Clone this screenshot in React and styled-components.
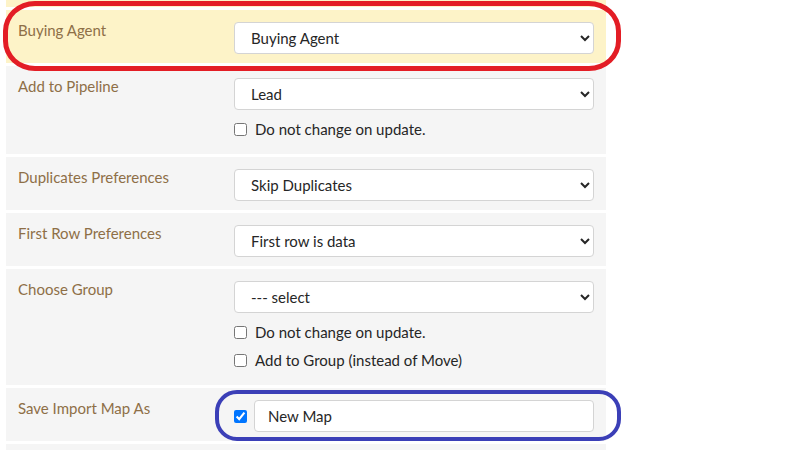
import styled, { createGlobalStyle } from "styled-components";

const GlobalStyle = createGlobalStyle`
  body {
    margin: 0;
    background: #fff;
    font-family: Lato, "Open Sans", Arial, sans-serif;
  }
`;

const Page = styled.div`
  position: relative;
  width: 800px;
  height: 450px;
  overflow: hidden;
`;

const Panel = styled.div`
  width: 600px;
  margin-left: 6px;
  display: flex;
  flex-direction: column;
  gap: 3px;
`;

const Row = styled.div`
  display: grid;
  grid-template-columns: 216px 1fr;
  padding: 12px 12px 9px;
  background: ${(p) => (p.$highlight ? "#fdf3c8" : "#f5f5f5")};
  min-height: ${(p) => (p.$stub ? "7px" : "auto")};
  ${(p) => p.$stub && "padding: 0;"}
`;

const Label = styled.div`
  color: #8e6f47;
  font-size: 15px;
  line-height: 16px;
`;

const Field = styled.div`
  display: flex;
  flex-direction: column;
`;

const Select = styled.select`
  height: 32px;
  width: 100%;
  border: 1px solid #d4d4d4;
  border-radius: 4px;
  background: #fff;
  color: #262626;
  font-family: inherit;
  font-size: 15px;
  padding: 0 12px;
  outline: none;
`;

const Options = styled.div`
  display: flex;
  flex-direction: column;
  gap: 6px;
  margin-top: 8px;
  padding-bottom: 5px;
`;

const Check = styled.label`
  display: flex;
  align-items: center;
  gap: 8px;
  height: 22px;
  font-size: 15px;
  color: #262626;

  input {
    margin: 0;
    width: 13px;
    height: 13px;
  }
`;

const SaveField = styled.div`
  display: flex;
  align-items: center;
  gap: 7px;

  input[type="checkbox"] {
    margin: 0;
    width: 13px;
    height: 13px;
  }
`;

const TextInput = styled.input`
  flex: 1;
  height: 32px;
  box-sizing: border-box;
  border: 1px solid #d4d4d4;
  border-radius: 4px;
  background: #fff;
  color: #262626;
  font-family: inherit;
  font-size: 15px;
  padding: 0 13px;
  outline: none;
`;

// hand-drawn annotation rings laid over the form
const Mark = styled.div`
  position: absolute;
  box-sizing: border-box;
  pointer-events: none;
  left: ${(p) => p.$x}px;
  top: ${(p) => p.$y}px;
  width: ${(p) => p.$w}px;
  height: ${(p) => p.$h}px;
  border: ${(p) => p.$stroke}px solid ${(p) => p.$color};
  border-radius: ${(p) => p.$r};
`;

const SelectRow = ({ label, value, options = [value], checks = [], highlight }) => (
  <Row $highlight={highlight}>
    <Label>{label}</Label>
    <Field>
      <Select defaultValue={value}>
        {options.map((o) => (
          <option key={o}>{o}</option>
        ))}
      </Select>
      {checks.length > 0 && (
        <Options>
          {checks.map((c) => (
            <Check key={c}>
              <input type="checkbox" />
              {c}
            </Check>
          ))}
        </Options>
      )}
    </Field>
  </Row>
);

export default function App() {
  return (
    <Page>
      <GlobalStyle />
      <Panel>
        <Row $highlight $stub />
        <SelectRow highlight label="Buying Agent" value="Buying Agent" />
        <SelectRow
          label="Add to Pipeline"
          value="Lead"
          checks={["Do not change on update."]}
        />
        <SelectRow label="Duplicates Preferences" value="Skip Duplicates" />
        <SelectRow label="First Row Preferences" value="First row is data" />
        <SelectRow
          label="Choose Group"
          value="--- select"
          checks={["Do not change on update.", "Add to Group (instead of Move)"]}
        />
        <Row>
          <Label>Save Import Map As</Label>
          <SaveField>
            <input type="checkbox" defaultChecked />
            <TextInput defaultValue="New Map" />
          </SaveField>
        </Row>
        <Row>
          <Label />
        </Row>
      </Panel>
      <Mark $x={3} $y={1} $w={618} $h={70} $stroke={5} $color="#e31d25" $r="32px / 30px" />
      <Mark $x={215} $y={390} $w={406} $h={51} $stroke={4} $color="#3b3fb7" $r="22px / 22px" />
    </Page>
  );
}
